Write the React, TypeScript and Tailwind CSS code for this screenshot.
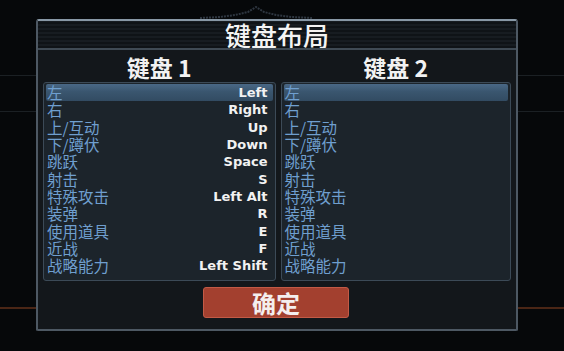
import React from "react";

// --- Key binding data ---
const bindings: { action: string; key1: string }[] = [
  { action: "左", key1: "Left" },
  { action: "右", key1: "Right" },
  { action: "上/互动", key1: "Up" },
  { action: "下/蹲伏", key1: "Down" },
  { action: "跳跃", key1: "Space" },
  { action: "射击", key1: "S" },
  { action: "特殊攻击", key1: "Left Alt" },
  { action: "装弹", key1: "R" },
  { action: "使用道具", key1: "E" },
  { action: "近战", key1: "F" },
  { action: "战略能力", key1: "Left Shift" },
];

const cjk = "font-['Noto_Sans_CJK_SC',sans-serif]";

interface BindingListProps {
  showKeys: boolean;
  className?: string;
}

const BindingList: React.FC<BindingListProps> = ({ showKeys, className }) => {
  return (
    <div
      className={`h-[199px] rounded-[3px] border border-[#3c4a57] bg-[#1c242b] px-[2px] pt-[1px] ${className ?? ""}`}
    >
      {bindings.map((b, i) => (
        <div
          key={b.action}
          className={`flex h-[17.3px] items-center justify-between pl-[1px] pr-[5px] ${
            i === 0
              ? "rounded-[2px] bg-[linear-gradient(180deg,#4a6886_0%,#3a566f_45%,#324b62_100%)]"
              : ""
          }`}
        >
          <span
            className={`${cjk} text-[15.5px] leading-[17px] text-[#6f9fcf]`}
          >
            {b.action}
          </span>
          {showKeys && (
            <span className="font-['DejaVu_Sans',sans-serif] text-[13px] font-bold leading-[17px] text-[#f2f2f2]">
              {b.key1}
            </span>
          )}
        </div>
      ))}
    </div>
  );
};

export default function App() {
  return (
    <div className="relative h-[351px] w-[564px] overflow-hidden bg-[#06080a]">
      {/* background decoration lines */}
      <div className="absolute left-0 top-[75px] h-[1px] w-full bg-[#1b2024]" />
      <div className="absolute left-0 top-[111px] h-[1px] w-full bg-[#1b2024]" />
      <div className="absolute left-0 top-[307px] h-[2px] w-full bg-[#4a2616]" />
      <svg
        className="absolute left-[200px] top-[6px]"
        width="112"
        height="14"
        viewBox="0 0 112 14"
      >
        <path
          d="M0 12 L20 11 L35 9 L48 6 L56 1 L64 6 L76 9 L92 11 L112 12"
          fill="none"
          stroke="#2e3640"
          strokeWidth="2"
          strokeDasharray="2 1"
        />
      </svg>

      <div className="relative ml-[36px] mt-[19px] flex h-[312px] w-[482px] flex-col rounded-t-[3px] rounded-b-[2px] border-2 border-[#4d5863] border-t-[#8898a6] bg-[#13171b]">
        {/* title bar */}
        <div className="flex h-[27px] items-center justify-center bg-[repeating-linear-gradient(0deg,#0f1317_0px,#0f1317_2px,#171c21_2px,#171c21_4px)]">
          <span
            className={`${cjk} text-[26px] font-medium leading-none text-[#f4f4f4]`}
          >
            键盘布局
          </span>
        </div>
        <div className="h-[2px] bg-[#3f4a54]" />

        {/* column headers */}
        <div className="flex h-[32px] items-center px-[5px] pt-[2px]">
          <div
            className={`${cjk} w-[233px] text-center text-[23px] font-bold leading-none text-[#f2f2f2]`}
          >
            键盘 1
          </div>
          <div
            className={`${cjk} ml-[5px] w-[231px] text-center text-[23px] font-bold leading-none text-[#f2f2f2]`}
          >
            键盘 2
          </div>
        </div>

        {/* binding lists */}
        <div className="flex gap-[5px] px-[5px]">
          <BindingList showKeys className="w-[233px]" />
          <BindingList showKeys={false} className="w-[231px]" />
        </div>

        {/* confirm button */}
        <div className="mt-[6px] flex justify-center pr-[4px]">
          <button
            className={`${cjk} ml-[2px] flex h-[31px] w-[146px] items-center justify-center rounded-[3px] border border-[#c25a46] bg-[#a3402f] text-[24px] font-bold leading-none text-[#f4eeee]`}
          >
            确定
          </button>
        </div>
      </div>
    </div>
  );
}
